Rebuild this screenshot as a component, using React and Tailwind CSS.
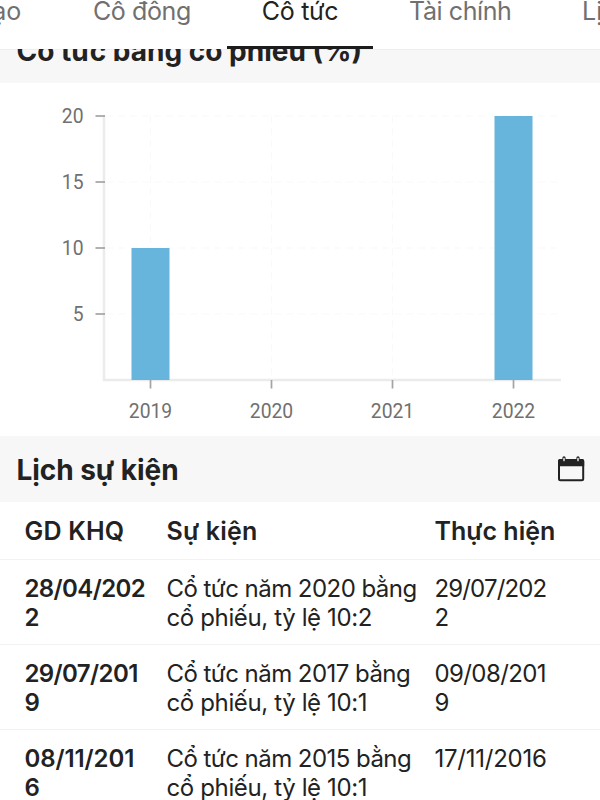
import React from "react";

const tabs = [
  { name: "Lãnh đạo", box: "w-[140px] -ml-[119px] justify-end tracking-[-0.2px]" },
  { name: "Cổ đông", box: "w-[97px] ml-[72px] justify-start tracking-[-0.4px]" },
  { name: "Cổ tức", box: "w-[146px] ml-[37px] justify-center tracking-[-0.3px]", active: true },
  { name: "Tài chính", box: "w-[102px] ml-[36px] justify-start tracking-[-0.4px]" },
  { name: "Lịch sử", box: "w-[100px] ml-[71px] justify-start" },
];

const dividends = [
  { year: 2019, value: 10 },
  { year: 2020, value: 0 },
  { year: 2021, value: 0 },
  { year: 2022, value: 20 },
];

const events = [
  {
    exDate: ["28/04/202", "2"],
    exClass: "tracking-[-0.6px]",
    event: ["Cổ tức năm 2020 bằng", "cổ phiếu, tỷ lệ 10:2"],
    payDate: ["29/07/202", "2"],
    payClass: "tracking-[-0.85px]",
  },
  {
    exDate: ["29/07/201", "9"],
    exClass: "tracking-[-0.6px]",
    event: ["Cổ tức năm 2017 bằng", "cổ phiếu, tỷ lệ 10:1"],
    payDate: ["09/08/201", "9"],
    payClass: "tracking-[-0.6px]",
  },
  {
    exDate: ["08/11/201", "6"],
    exClass: "tracking-[-0.1px]",
    event: ["Cổ tức năm 2015 bằng", "cổ phiếu, tỷ lệ 10:1"],
    payDate: ["17/11/2016"],
    payClass: "tracking-[-0.25px]",
  },
];

const TabBar = () => (
  <nav className="relative z-10 flex h-[49px] shrink-0 bg-white">
    {tabs.map((tab) => (
      <div
        key={tab.name}
        className={`relative flex h-[49px] shrink-0 whitespace-nowrap text-[25px] leading-[22px] ${tab.box} ${
          tab.active ? "text-[#222222]" : "text-[#707070]"
        }`}
      >
        {tab.name}
        {tab.active && (
          <span className="absolute bottom-0 left-0 h-[3px] w-full bg-[#1c1c1c]" />
        )}
      </div>
    ))}
  </nav>
);

const DividendChart = () => {
  const base = 297;
  const yOf = (v) => base - v * 13.2;
  const xOf = (i) => 150.5 + i * 121;

  return (
    <svg width="600" height="353" className="block shrink-0">
      {/* grid */}
      <g stroke="#f9f9f9" strokeWidth="1" strokeDasharray="7 5">
        {[5, 10, 15, 20].map((v) => (
          <line key={v} x1="106" x2="561" y1={yOf(v)} y2={yOf(v)} />
        ))}
        {dividends.map((d, i) => (
          <line key={d.year} x1={xOf(i)} x2={xOf(i)} y1="33" y2={base} />
        ))}
      </g>

      {/* axes */}
      <path d="M104 32V297H561" fill="none" stroke="#ebebeb" strokeWidth="2.5" />

      {dividends.map((d, i) => (
        <rect
          key={d.year}
          x={xOf(i) - 19}
          y={yOf(d.value)}
          width="38"
          height={d.value * 13.2}
          fill="#67b5dc"
        />
      ))}

      <g stroke="#a3a3a3" strokeWidth="1.7">
        {[5, 10, 15, 20].map((v) => (
          <line key={v} x1="95.5" x2="105" y1={yOf(v)} y2={yOf(v)} />
        ))}
        {dividends.map((d, i) => (
          <line key={d.year} x1={xOf(i)} x2={xOf(i)} y1="297" y2="305.5" />
        ))}
      </g>

      <g fill="#707070" className="font-['Roboto',sans-serif] text-[19.3px]">
        {[5, 10, 15, 20].map((v) => (
          <text key={v} x="83.5" y={yOf(v) + 7} textAnchor="end">
            {v}
          </text>
        ))}
        {dividends.map((d, i) => (
          <text key={d.year} x={xOf(i)} y="334.5" textAnchor="middle">
            {d.year}
          </text>
        ))}
      </g>
    </svg>
  );
};

const CalendarIcon = () => (
  <svg width="28" height="26" viewBox="0 0 28 26" fill="none">
    <rect x="2" y="4" width="24.2" height="20.2" rx="1.5" stroke="#222" strokeWidth="2" />
    <path d="M1 10.2V5Q1 3 3 3H25.2Q27.2 3 27.2 5V10.2Z" fill="#222" />
    <path d="M7 1.8V4.6M21 1.8V4.6" stroke="#222" strokeWidth="3.2" strokeLinecap="round" />
    <path d="M7 2.6V4.6M21 2.6V4.6" stroke="#dddddd" strokeWidth="1.6" strokeLinecap="round" />
  </svg>
);

const Lines = ({ lines, className }) => (
  <div className={`whitespace-nowrap ${className}`}>
    {lines.map((line) => (
      <div key={line}>{line}</div>
    ))}
  </div>
);

const EventTable = () => (
  <div className="text-[24px] leading-[29px] text-[#222222]">
    <div className="grid h-[58px] grid-cols-[142px_268px_1fr] items-center whitespace-nowrap border-b border-[#f2f2f2] pl-[24.5px] pt-[2px] text-[25px] font-semibold">
      <div className="tracking-[0.2px]">GD KHQ</div>
      <div className="tracking-[0.2px]">Sự kiện</div>
      <div>Thực hiện</div>
    </div>
    {events.map((e) => (
      <div
        key={e.exDate[0]}
        className="grid h-[85px] grid-cols-[142px_268px_1fr] border-b border-[#f2f2f2] pl-[24.5px] pt-[14px]"
      >
        <Lines lines={e.exDate} className={`font-semibold ${e.exClass}`} />
        <div className="whitespace-nowrap">
          <div className="tracking-[-0.54px]">{e.event[0]}</div>
          <div className="tracking-[-0.37px]">{e.event[1]}</div>
        </div>
        <Lines lines={e.payDate} className={e.payClass} />
      </div>
    ))}
  </div>
);

const App = () => {
  return (
    <div className="flex h-[800px] w-[600px] flex-col overflow-hidden bg-white font-['Inter',sans-serif]">
      <TabBar />
      {/* heading scrolled halfway under the tabs */}
      <div className="flex h-[34px] shrink-0 items-end overflow-hidden bg-[#f7f7f7] shadow-[inset_0_1px_0_#eeeeee]">
        <h2 className="h-[66px] whitespace-nowrap pl-[16.5px] text-[28px] font-bold leading-[68px] text-[#222222]">
          Cổ tức bằng cổ phiếu (%)
        </h2>
      </div>
      <DividendChart />
      <div className="flex h-[66px] shrink-0 items-center justify-between bg-[#f7f7f7] pl-[16.5px] pr-[15px]">
        <h2 className="pt-[2px] text-[28px] font-bold tracking-[-0.05px] text-[#222222]">
          Lịch sự kiện
        </h2>
        <CalendarIcon />
      </div>
      <EventTable />
    </div>
  );
};

export default App;
